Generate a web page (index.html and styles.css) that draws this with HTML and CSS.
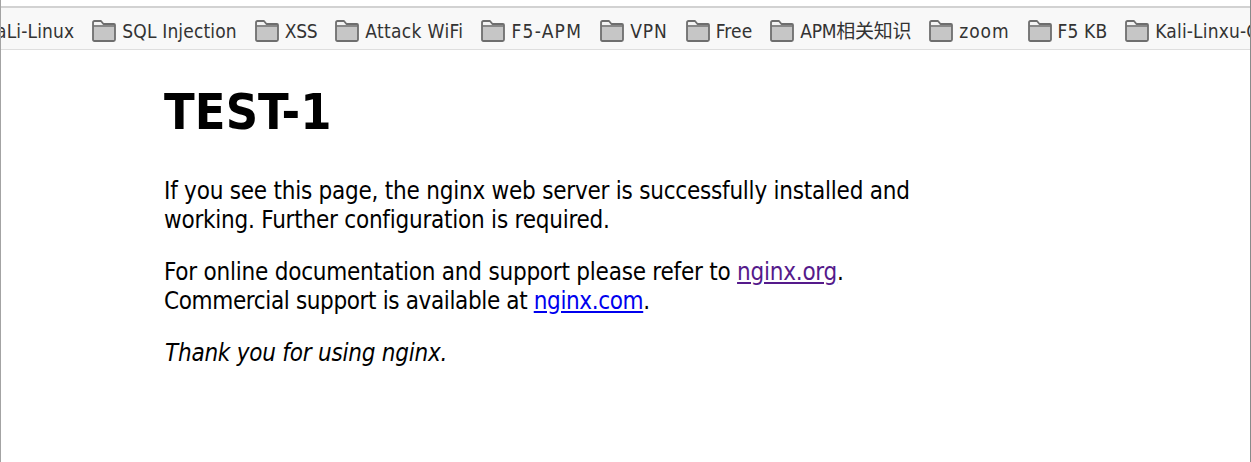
FILE: index.html
```html
<!DOCTYPE html>
<html lang="en">
<head>
<meta charset="utf-8">
<title>Welcome to nginx!</title>
<link rel="stylesheet" href="styles.css">
</head>
<body>
<svg width="0" height="0" class="defs" aria-hidden="true">
  <symbol id="folder" viewBox="0 0 24 22">
    <path d="M1 19.5V2.500Q1 1 2.500 1H9L11.500 4H22Q23 4 23 5V19.500Q23 21 21.500 21H2.500Q1 21 1 19.500Z" fill="#c6c6c6" stroke="#6e6e6e" stroke-width="1.800" stroke-linejoin="round"/>
    <path d="M1.500 6H22.500" fill="none" stroke="#6e6e6e" stroke-width="1.400"/>
    <path d="M2 5V3Q2 2 3 2H8.500L10.800 5Z" fill="#f4f4f4"/>
  </symbol>
</svg>
<div class="window">
  <nav class="bookmarks">
    <span class="mark first">KaLi-Linux</span>
    <span class="mark"><svg class="folder"><use href="#folder"/></svg>SQL Injection</span>
    <span class="mark narrow"><svg class="folder"><use href="#folder"/></svg>XSS</span>
    <span class="mark loose"><svg class="folder"><use href="#folder"/></svg>Attack WiFi</span>
    <span class="mark wider"><svg class="folder"><use href="#folder"/></svg>F5-APM</span>
    <span class="mark wide"><svg class="folder"><use href="#folder"/></svg>VPN</span>
    <span class="mark"><svg class="folder"><use href="#folder"/></svg>Free</span>
    <span class="mark cjk"><svg class="folder"><use href="#folder"/></svg>APM相关知识</span>
    <span class="mark wide"><svg class="folder"><use href="#folder"/></svg>zoom</span>
    <span class="mark"><svg class="folder"><use href="#folder"/></svg>F5 KB</span>
    <span class="mark"><svg class="folder"><use href="#folder"/></svg>Kali-Linxu-Command</span>
  </nav>
  <main class="page">
    <h1 class="title">TEST-1</h1>
    <p class="para">If you see this page, the nginx web server is successfully installed and working. Further configuration is required.</p>
    <p class="para">For online documentation and support please refer to <a class="visited" href="#org">nginx.org</a>.<br>
    <span class="snug">Commercial support is available at <a class="link" href="#com">nginx.com</a>.</span></p>
    <p class="para thanks"><em>Thank you for using nginx.</em></p>
  </main>
</div>
</body>
</html>
```

FILE: styles.css
```css
* { box-sizing: border-box; }
html, body { margin: 0; height: 100%; background: #fff; overflow: hidden; }
.defs { position: absolute; }
.window {
  height: 462px;
  padding-top: 6px;
  border-left: 1px solid #a3a3a3;
  border-right: 1px solid #8a8a8a;
  display: flex;
  flex-direction: column;
  font-family: "DejaVu Sans", "Noto Sans CJK SC", sans-serif;
  font-stretch: condensed;
}
.bookmarks {
  height: 44px;
  flex: none;
  display: flex;
  align-items: center;
  gap: 18px;
  padding-top: 4px;
  background: #f8f8f8;
  border-top: 2px solid #d2d2d2;
  border-bottom: 1px solid #dedede;
  overflow: hidden;
  font-size: 19px;
  line-height: 22px;
  letter-spacing: 0.15px;
  color: #333;
  white-space: nowrap;
}
.mark { display: flex; align-items: center; gap: 6px; flex: none; }
.first { margin-left: -16px; }
.narrow { letter-spacing: -0.35px; }
.loose { letter-spacing: 0.35px; }
.wide { letter-spacing: 0.9px; }
.wider { letter-spacing: 1.25px; }
.cjk { letter-spacing: -0.25px; }
.folder { width: 24px; height: 22px; flex: none; }
.page { padding: 0 0 0 163px; width: 964px; color: #000; font-size: 24px; line-height: 28.5px; letter-spacing: -0.23px; }
.title { margin: 34px 0 37px; font-size: 50px; line-height: 56px; font-weight: 700; letter-spacing: 0.1px; }
.para { margin: 0 0 24px; }
.snug { letter-spacing: -0.37px; }
.thanks { padding-left: 1px; }
.visited { color: #551a8b; }
.link { color: #0000ee; }
```
